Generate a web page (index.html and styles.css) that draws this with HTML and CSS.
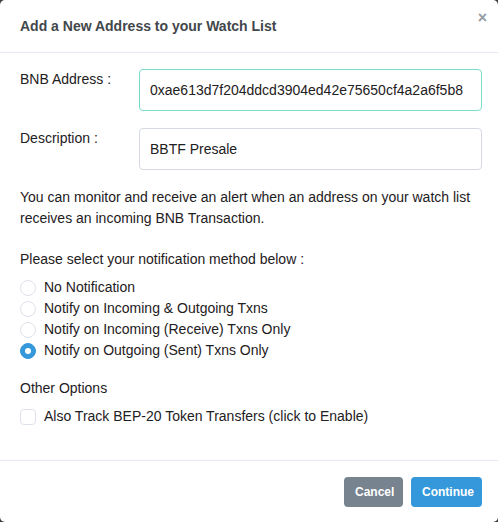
FILE: index.html
```html
<!DOCTYPE html>
<html lang="en">
<head>
  <meta charset="UTF-8">
  <title>Watch List</title>
  <link rel="stylesheet" href="styles.css">
</head>
<body>

<div class="modal">
  <div class="modal-header">
    <h5 class="modal-title">Add a New Address to your Watch List</h5>
    <button class="close-btn">&times;</button>
  </div>

  <div class="modal-body">
    <div class="form-row">
      <label class="form-label">BNB Address :</label>
      <input type="text" class="form-input focused" value="0xae613d7f204ddcd3904ed42e75650cf4a2a6f5b8">
    </div>
    <div class="form-row">
      <label class="form-label">Description :</label>
      <input type="text" class="form-input" value="BBTF Presale">
    </div>

    <p class="note">You can monitor and receive an alert when an address on your watch list receives an incoming BNB Transaction.</p>

    <p class="section-title">Please select your notification method below :</p>
    <div class="choice-list">
      <label class="choice"><span class="radio"></span>No Notification</label>
      <label class="choice"><span class="radio"></span>Notify on Incoming &amp; Outgoing Txns</label>
      <label class="choice"><span class="radio"></span>Notify on Incoming (Receive) Txns Only</label>
      <label class="choice"><span class="radio checked"></span>Notify on Outgoing (Sent) Txns Only</label>
    </div>

    <p class="section-title other">Other Options</p>
    <div class="choice-list">
      <label class="choice"><span class="checkbox"></span>Also Track BEP-20 Token Transfers (click to Enable)</label>
    </div>
  </div>

  <div class="modal-footer">
    <button class="btn btn-cancel">Cancel</button>
    <button class="btn btn-continue">Continue</button>
  </div>
</div>

</body>
</html>
```

FILE: styles.css
```css
html, body {
  margin: 0;
  padding: 0;
}
body {
  background: #3a3d40;
  font-family: "Liberation Sans", Arial, sans-serif;
  font-size: 14px;
  line-height: 21px;
  color: #1e2022;
}
.modal {
  background: #fff;
  width: 498px;
  height: 522px;
  border-radius: 5px;
  display: flex;
  flex-direction: column;
  box-sizing: border-box;
}
.modal-header {
  display: flex;
  align-items: flex-start;
  justify-content: space-between;
  padding: 16px 20px 15px 20px;
  border-bottom: 1px solid #e7eaf3;
}
.modal-title {
  margin: 0;
  font-size: 14px;
  font-weight: bold;
  line-height: 21px;
  color: #42474c;
}
.close-btn {
  border: none;
  background: none;
  padding: 0;
  margin: -9px -9px 0 0;
  font-family: "Liberation Sans", Arial, sans-serif;
  font-size: 16px;
  font-weight: bold;
  line-height: 21px;
  color: #949ca4;
}
.modal-body {
  flex: 1;
  padding: 16px 16px 0 20px;
}
.form-row {
  display: grid;
  grid-template-columns: 111px 1fr;
  gap: 8px;
  margin-bottom: 17px;
}
.form-label {
  color: #1e2022;
}
.form-input {
  font-family: "Liberation Sans", Arial, sans-serif;
  font-size: 14px;
  line-height: 20px;
  color: #1e2022;
  padding: 10px 10px;
  border: 1px solid #d5dae2;
  border-radius: 4px;
  outline: none;
  width: 100%;
  box-sizing: border-box;
  height: 42px;
}
.form-input.focused {
  border-color: #7adacb;
}
.note {
  margin: 16px 0 20px 0;
}
.section-title {
  margin: 0 0 7px 0;
}
.section-title.other {
  margin-top: 17px;
}
.choice-list {
  display: flex;
  flex-direction: column;
}
.choice {
  display: flex;
  align-items: center;
  gap: 8px;
  height: 21px;
}
.radio, .checkbox {
  width: 16px;
  height: 16px;
  box-sizing: border-box;
  border: 1px solid #dde2ea;
  background: #fff;
  flex-shrink: 0;
}
.radio {
  border-radius: 50%;
}
.radio.checked {
  background: #3498db;
  border-color: #3498db;
  display: flex;
  align-items: center;
  justify-content: center;
}
.radio.checked::after {
  content: "";
  width: 6px;
  height: 6px;
  border-radius: 50%;
  background: #fff;
}
.checkbox {
  border-radius: 4px;
}
.modal-footer {
  display: flex;
  justify-content: flex-end;
  gap: 8px;
  padding: 16px 16px 15px 16px;
  border-top: 1px solid #e7eaf3;
}
.btn {
  font-family: "Liberation Sans", Arial, sans-serif;
  font-size: 12px;
  font-weight: bold;
  color: #fff;
  border: none;
  border-radius: 4px;
  height: 30px;
  padding: 0 11px;
}
.btn-cancel {
  background: #77838f;
  width: 59px;
}
.btn-continue {
  background: #3498db;
  width: 71px;
}
```
